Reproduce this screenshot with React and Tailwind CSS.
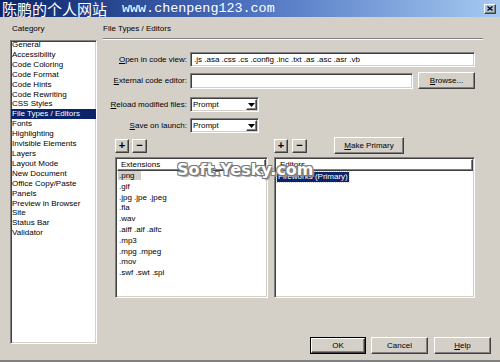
import React from 'react';

// Windows-classic style bevels
const sunken = 'border border-[#808080] border-b-white border-r-white shadow-[inset_1px_1px_0_#404040,inset_-1px_-1px_0_#d4d0c8]';
const raised = 'border border-white border-b-[#404040] border-r-[#404040] shadow-[inset_-1px_-1px_0_#808080]';

const categories = [
  'General', 'Accessibility', 'Code Coloring', 'Code Format', 'Code Hints', 'Code Rewriting',
  'CSS Styles', 'File Types / Editors', 'Fonts', 'Highlighting', 'Invisible Elements', 'Layers',
  'Layout Mode', 'New Document', 'Office Copy/Paste', 'Panels', 'Preview in Browser', 'Site',
  'Status Bar', 'Validator',
];

const extensions = [
  '.png', '.gif', '.jpg .jpe .jpeg', '.fla', '.wav', '.aiff .aif .aifc', '.mp3', '.mpg .mpeg', '.mov',
  '.swf .swt .spl',
];

const Key = ({ children }) => <span className="underline">{children}</span>;

function Btn({ className = '', children }) {
  return (
    <div className={`${raised} flex items-center justify-center bg-[#d4d0c8] ${className}`}>
      {children}
    </div>
  );
}

function Select({ value }) {
  return (
    <div className={`${sunken} bg-white w-[69px] h-[15px] flex items-center`}>
      <span className="flex-1 pl-[2px] leading-[10px]">{value}</span>
      <div className={`${raised} w-[11px] h-[11px] mr-px flex items-center justify-center`}>
        <svg width="7" height="4" viewBox="0 0 7 4"><path d="M0 0h7L3.5 4z" fill="#000" /></svg>
      </div>
    </div>
  );
}

export default function App() {
  return (
    <div className="relative w-[500px] h-[362px] overflow-hidden bg-[#d4d0c8] text-black text-[8px] leading-[10px] font-['Liberation_Sans',Arial,sans-serif] border-b-2 border-b-[#808080]">
      {/* Title bar */}
      <div className="h-[17px] flex items-center bg-gradient-to-r from-[#0a246a] via-[#4f72c0] to-[#a6caf0] text-white pl-[2px]">
        <span className="text-[15px] leading-[17px] font-['Noto_Sans_CJK_SC',sans-serif]">陈鹏的个人网站</span>
        <span className="ml-[15px] text-[13.4px] leading-[17px] font-['Liberation_Mono',monospace]">www.chenpeng123.com</span>
        <div className="flex-1" />
        <div className={`${raised} w-[12px] h-[10px] mr-[4px] flex items-center justify-center text-black`}>
          <svg width="6" height="5" viewBox="0 0 6 5"><path d="M0.5 0.5l5 4M5.5 0.5l-5 4" stroke="#000" strokeWidth="1.3" /></svg>
        </div>
      </div>

      <div className="flex pl-[10px]">
        {/* Category column */}
        <div className="w-[87px] flex flex-col pt-[7px]">
          <div className="h-[10px] pl-[2px]">Category</div>
          <div className={`${sunken} mt-[6px] h-[304px] bg-white overflow-hidden`}>
            <div className="-mt-[1px] leading-[9.9px]">
              {categories.map(c => (
                <div
                  key={c}
                  className={`pl-[1px] ${c === 'File Types / Editors' ? 'bg-[#0a246a] text-white' : ''}`}
                >
                  {c}
                </div>
              ))}
            </div>
          </div>
        </div>

        {/* Right panel */}
        <div className="ml-[6px] flex-1 flex flex-col pt-[7px]">
          <div className="h-[10px]">File Types / Editors</div>
          <div className="mt-[4px] w-[380px] h-[2px] border-t border-t-[#808080] border-b border-b-white" />

          <div className="mt-[12px] flex items-center">
            <div className="w-[84px] text-right"><Key>O</Key>pen in code view:</div>
            <div className={`${sunken} ml-[3px] w-[285px] h-[15px] bg-white flex items-center pl-[3px]`}>
              .js .asa .css .cs .config .inc .txt .as .asc .asr .vb
            </div>
          </div>

          <div className="mt-[5px] flex items-center">
            <div className="w-[84px] text-right"><Key>E</Key>xternal code editor:</div>
            <div className={`${sunken} ml-[3px] w-[223px] h-[16px] bg-white`} />
            <Btn className="ml-[5px] w-[57px] h-[17px]"><span><Key>B</Key>rowse...</span></Btn>
          </div>

          <div className="mt-[8px] flex items-center">
            <div className="w-[84px] text-right"><Key>R</Key>eload modified files:</div>
            <div className="ml-[3px]"><Select value="Prompt" /></div>
          </div>

          <div className="mt-[6px] flex items-center">
            <div className="w-[84px] text-right"><Key>S</Key>ave on launch:</div>
            <div className="ml-[3px]"><Select value="Prompt" /></div>
          </div>

          {/* +/- rows */}
          <div className="mt-[4px] ml-[12px] flex items-center h-[17px]">
            <div className="w-[159px] flex gap-[3px]">
              <Btn className="w-[14px] h-[14px] text-[11px] font-bold leading-none">+</Btn>
              <Btn className="w-[15px] h-[14px] text-[11px] font-bold leading-none">−</Btn>
            </div>
            <div className="flex items-center gap-[4px]">
              <Btn className="w-[14px] h-[14px] text-[11px] font-bold leading-none">+</Btn>
              <Btn className="w-[15px] h-[14px] text-[11px] font-bold leading-none">−</Btn>
              <Btn className="ml-[23px] w-[70px] h-[17px]"><span><Key>M</Key>ake Primary</span></Btn>
            </div>
          </div>

          {/* Lists */}
          <div className="mt-[3px] ml-[12px] flex gap-[6px]">
            <div className={`${sunken} w-[153px] h-[141px] bg-white overflow-hidden`}>
              <div className={`${raised} h-[12px] pl-[3px] leading-[10px] mx-px mt-px`}>Extensions</div>
              <div className="pl-[2px] leading-[10.8px]">
                {extensions.map(e => (
                  <div key={e}>
                    <span className={e === '.png' ? 'bg-[#d4d0c8] pr-[6px] pl-px' : 'pl-px'}>{e}</span>
                  </div>
                ))}
              </div>
            </div>
            <div className={`${sunken} w-[201px] h-[141px] bg-white overflow-hidden`}>
              <div className={`${raised} h-[12px] pl-[3px] leading-[10px] mx-px mt-px`}>Editors</div>
              <div className="pl-[2px] pt-px">
                <span className="inline-block bg-[#0a246a] text-white px-px leading-[10px] outline outline-1 outline-dotted outline-[#d4d0c8]">
                  Fireworks (Primary)
                </span>
              </div>
            </div>
          </div>

          {/* Dialog buttons */}
          <div className="mt-[39px] ml-[207px] flex gap-[5px]">
            <div className="border border-black">
              <Btn className="w-[54px] h-[15px]">OK</Btn>
            </div>
            <Btn className="w-[57px] h-[17px]">Cancel</Btn>
            <Btn className="ml-px w-[57px] h-[17px]"><span><Key>H</Key>elp</span></Btn>
          </div>
        </div>
      </div>

      {/* Watermark */}
      <div className="absolute left-[177px] top-[161px] text-[16px] leading-[18px] font-bold font-['DejaVu_Sans',sans-serif] text-white [text-shadow:1px_1px_0_#7a7a7a,-1px_-1px_0_#7a7a7a,1px_-1px_0_#7a7a7a,-1px_1px_0_#7a7a7a,2px_2px_1px_#999]">
        Soft.Yesky.com
      </div>
    </div>
  );
}
